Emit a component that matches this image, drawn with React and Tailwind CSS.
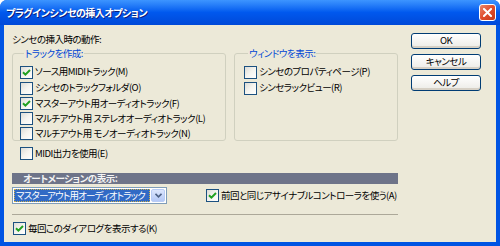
import React from "react";

const font = "[font-family:'Noto_Sans_CJK_JP','Noto_Sans',sans-serif] [font-feature-settings:'palt']";

function Check({ checked }) {
  return (
    <span className="flex h-[13px] w-[13px] shrink-0 items-center justify-center border border-[#1C5180] bg-gradient-to-br from-[#DCDCD7] via-[#F5F4EF] to-white">
      {checked && (
        <svg width="9" height="9" viewBox="0 0 9 9">
          <path d="M1 4.2 L3.4 6.6 L8 2" fill="none" stroke="#21A121" strokeWidth="2" />
        </svg>
      )}
    </span>
  );
}

function Option({ checked, label, className = "" }) {
  return (
    <div className={`flex items-center gap-[2px] ${className}`}>
      <Check checked={checked} />
      <span className="whitespace-nowrap leading-none">{label}</span>
    </div>
  );
}

function Group({ title, className = "", children }) {
  return (
    <fieldset className={`rounded-[3px] border border-[#D0D0BF] ${className}`}>
      <legend className="ml-[4px] px-[1px] leading-[12px] text-[#0046D5]">{title}</legend>
      {children}
    </fieldset>
  );
}

function XpButton({ children }) {
  return (
    <button className="flex h-[16px] w-[70px] items-center justify-center rounded-[3px] border border-[#003C74] bg-gradient-to-b from-white to-[#ECEBE6] leading-none text-black shadow-[inset_0_-2px_0_#D6D0C5]">
      {children}
    </button>
  );
}

export default function App() {
  return (
    <div className={`flex h-[246px] w-[500px] flex-col overflow-hidden rounded-t-[7px] bg-[#0054E3] text-[9.5px] tracking-[-0.5px] text-black ${font}`}>
      {/* title bar */}
      <div className="flex h-[25px] shrink-0 items-center justify-between bg-gradient-to-b from-[#3D95FF] via-[#0058EE] to-[#0049D8] pl-[6px] pr-[4px]">
        <span className="text-[10px] font-bold text-white [text-shadow:1px_1px_0_#0A1F7D]">
          プラグインシンセの挿入オプション
        </span>
        <button className="flex h-[17px] w-[17px] items-center justify-center rounded-[3px] border border-white bg-gradient-to-br from-[#E8856A] via-[#E04C2B] to-[#C4381A]">
          <svg width="9" height="9" viewBox="0 0 9 9">
            <path d="M1 1 L8 8 M8 1 L1 8" stroke="white" strokeWidth="2" strokeLinecap="square" />
          </svg>
        </button>
      </div>

      {/* body */}
      <div className="mx-[4px] mb-[4px] flex flex-1 bg-[#ECE9D8] pl-[8px] pr-[15px]">
        <div className="flex w-[386px] flex-col">
          <div className="mt-[8px] leading-[12px]">シンセの挿入時の動作:</div>

          <div className="mt-[2px] flex gap-[8px]">
            <Group title="トラックを作成:" className="h-[94px] w-[214px] pl-[7px] pt-[5px]">
              <div className="flex flex-col">
                <Option checked label="ソース用MIDIトラック(M)" className="h-[16px]" />
                <Option label="シンセのトラックフォルダ(O)" className="h-[16px]" />
                <Option checked label="マスターアウト用オーディオトラック(F)" className="h-[15px]" />
                <Option label="マルチアウト用 ステレオオーディオトラック(L)" className="h-[15px]" />
                <Option label="マルチアウト用 モノオーディオトラック(N)" className="h-[15px]" />
              </div>
            </Group>
            <Group title="ウィンドウを表示:" className="h-[94px] w-[164px] pl-[9px] pt-[5px]">
              <div className="flex flex-col">
                <Option label="シンセのプロパティページ(P)" className="h-[16px]" />
                <Option label="シンセラックビュー(R)" className="h-[16px]" />
              </div>
            </Group>
          </div>

          <Option label="MIDI出力を使用(E)" className="ml-[8px] mt-[6px] h-[13px]" />

          <div className="mt-[13px] flex h-[11px] items-center bg-[#6E7489] pl-[11px] font-bold leading-none text-[#F4F4F4]">
            オートメーションの表示:
          </div>

          <div className="mt-[3px] flex items-center">
            <div className="flex h-[17px] w-[155px] items-center border border-[#7F9DB9] bg-white p-[1px]">
              <div className="flex h-full min-w-0 flex-1 items-center overflow-hidden whitespace-nowrap border border-dotted border-[#CEB04A] bg-[#316AC5] pl-[1px] leading-none tracking-[-0.8px] text-white">
                マスターアウト用オーディオトラック
              </div>
              <div className="ml-[1px] flex h-full w-[14px] shrink-0 items-center justify-center rounded-[2px] border border-[#B8CCF5] bg-gradient-to-b from-[#DCE6FD] to-[#B4C8F6]">
                <svg width="7" height="5" viewBox="0 0 7 5">
                  <path d="M0.5 0.8 L3.5 3.8 L6.5 0.8" fill="none" stroke="#4D6185" strokeWidth="1.6" />
                </svg>
              </div>
            </div>
            <Option checked label="前回と同じアサイナブルコントローラを使う(A)" className="ml-[39px]" />
          </div>

          <div className="mt-[10px] h-[2px] border-t border-[#ACA899] border-b-white" />

          <Option checked label="毎回このダイアログを表示する(K)" className="ml-[1px] mt-[6px]" />
        </div>

        <div className="ml-auto mt-[8px] flex flex-col gap-[5px]">
          <XpButton>OK</XpButton>
          <XpButton>キャンセル</XpButton>
          <XpButton>ヘルプ</XpButton>
        </div>
      </div>
    </div>
  );
}
